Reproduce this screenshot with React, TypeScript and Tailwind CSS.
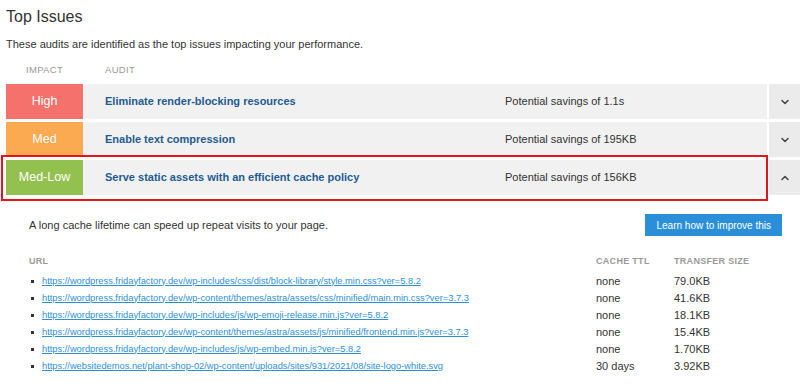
import { ChevronDown, ChevronUp } from "lucide-react"

const rows = [
    { impact: "High", color: "bg-[#f5716b]", audit: "Eliminate render-blocking resources", savings: "Potential savings of 1.1s", open: false },
    { impact: "Med", color: "bg-[#fcaa52]", audit: "Enable text compression", savings: "Potential savings of 195KB", open: false },
    { impact: "Med-Low", color: "bg-[#92c150]", audit: "Serve static assets with an efficient cache policy", savings: "Potential savings of 156KB", open: true },
]

const urls = [
    { url: "https://wordpress.fridayfactory.dev/wp-includes/css/dist/block-library/style.min.css?ver=5.8.2", ttl: "none", size: "79.0KB" },
    { url: "https://wordpress.fridayfactory.dev/wp-content/themes/astra/assets/css/minified/main.min.css?ver=3.7.3", ttl: "none", size: "41.6KB" },
    { url: "https://wordpress.fridayfactory.dev/wp-includes/js/wp-emoji-release.min.js?ver=5.8.2", ttl: "none", size: "18.1KB" },
    { url: "https://wordpress.fridayfactory.dev/wp-content/themes/astra/assets/js/minified/frontend.min.js?ver=3.7.3", ttl: "none", size: "15.4KB" },
    { url: "https://wordpress.fridayfactory.dev/wp-includes/js/wp-embed.min.js?ver=5.8.2", ttl: "none", size: "1.70KB" },
    { url: "https://websitedemos.net/plant-shop-02/wp-content/uploads/sites/931/2021/08/site-logo-white.svg", ttl: "30 days", size: "3.92KB" },
]

export default function App() {
    return (
        <div className="w-[800px] h-[390px] bg-white overflow-hidden font-['Liberation_Sans',Arial,sans-serif] text-[#333]">
            <div className="pl-[6px] pt-[7px]">
                <h1 className="text-[16px] leading-[20px]">Top Issues</h1>
                <p className="text-[11px] leading-[16px] mt-[9px]">These audits are identified as the top issues impacting your performance.</p>

                {/* table header */}
                <div className="flex mt-[11px] h-[14px] items-center text-[9.5px] tracking-[0.3px] text-[#999]">
                    <div className="w-[77px] text-center">IMPACT</div>
                    <div className="pl-[22px]">AUDIT</div>
                </div>

                {/* rows */}
                <div className="flex flex-col gap-[3px] mt-[7px]">
                    {rows.map((r) => (
                        <div key={r.impact} className="relative flex h-[35px]">
                            <div className={`w-[77px] flex items-center justify-center text-white text-[12.5px] ${r.color}`}>
                                {r.impact}
                            </div>
                            <div className="flex-1 flex items-center bg-[#f1f1f1]">
                                <div className="flex-1 pl-[22px] text-[11px] font-bold text-[#1f5b91]">{r.audit}</div>
                                <div className="w-[262px] text-[11px]">{r.savings}</div>
                            </div>
                            <div className="w-[31px] ml-[2px] flex items-center justify-center bg-[#ebebeb] text-[#444]">
                                {r.open ? <ChevronUp size={12} strokeWidth={3} /> : <ChevronDown size={12} strokeWidth={3} />}
                            </div>
                            {r.open && (
                                <div className="absolute left-[-5px] top-[-5px] w-[767px] h-[46px] border-2 border-[#e8141b]" />
                            )}
                        </div>
                    ))}
                </div>

                {/* expanded details */}
                <div className="pl-[23px] pr-[18px]">
                    <div className="flex items-center justify-between mt-[19px]">
                        <p className="text-[11px]">A long cache lifetime can speed up repeat visits to your page.</p>
                        <button className="h-[22px] px-[11px] bg-[#2a8fd8] text-white text-[10px]">Learn how to improve this</button>
                    </div>

                    <div className="flex mt-[20px] h-[12px] items-center text-[9px] font-bold text-[#999] tracking-[0.3px]">
                        <div className="flex-1">URL</div>
                        <div className="w-[78px]">CACHE TTL</div>
                        <div className="w-[108px]">TRANSFER SIZE</div>
                    </div>

                    <ul className="mt-[5px]">
                        {urls.map((u) => (
                            <li key={u.url} className="flex h-[17px] items-center text-[11px]">
                                <div className="flex-1 flex items-center">
                                    <span className="w-[3px] h-[3px] bg-[#333] ml-[2px] mr-[8px]" />
                                    <a className="text-[9.3px] text-[#2d8fd5] underline">{u.url}</a>
                                </div>
                                <div className="w-[78px]">{u.ttl}</div>
                                <div className="w-[108px]">{u.size}</div>
                            </li>
                        ))}
                    </ul>
                </div>
            </div>
        </div>
    );
}
